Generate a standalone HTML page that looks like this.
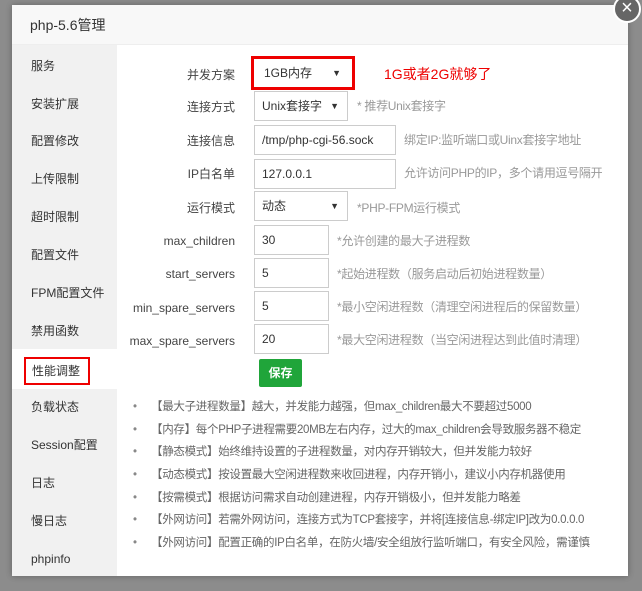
<!DOCTYPE html>
<html><head><meta charset="utf-8"><style>
*{margin:0;padding:0;box-sizing:border-box}
body{width:642px;height:591px;background:#8c8c8c;position:relative;overflow:hidden;font-family:"Liberation Sans","Noto Sans CJK SC",sans-serif;font-size:12px;color:#555;line-height:14px}
.dlg{position:absolute;left:12px;top:5px;width:616px;height:571px;background:#fff;box-shadow:0 0 6px rgba(0,0,0,.3)}
.hd{height:40px;background:#f8f8f8;border-bottom:1px solid #eee;font-size:14px;color:#333;line-height:40px;padding-left:18px}
.side{position:absolute;left:0;top:40px;width:105px;bottom:0;background:#f1f1f1}
.side div{position:absolute;left:19px;font-size:12px;color:#333}
.act{position:absolute;left:0;top:304px;width:105px;height:40px;background:#fff}
.lab{position:absolute;width:120px;text-align:right;font-size:12px;color:#444}
.inp{position:absolute;border:1px solid #ccc;height:30px;line-height:28px;padding-left:7px;font-size:12px;color:#333;background:#fff}
.inp .ar{position:absolute;right:8px;top:0;font-size:9px}
.tip{position:absolute;font-size:12px;color:#999;letter-spacing:-0.3px}
ul{position:absolute;left:121px;top:391px;list-style:none}
li{height:22.7px;line-height:22.7px;color:#666;font-size:11.5px;white-space:nowrap;letter-spacing:-0.3px}
li:before{content:"•";display:inline-block;width:18px;color:#888}
.close{position:absolute;left:613px;top:-5px;width:28px;height:28px;border-radius:50%;background:#666;border:2px solid #fff;color:#fff;font-size:20px;line-height:23px;text-align:center}
</style></head><body>
<div class="dlg">
<div class="hd">php-5.6管理</div>
<div class="side">
<div class="act" style="left:0;"></div>
<div style="top:14px">服务</div>
<div style="top:52px">安装扩展</div>
<div style="top:89px">配置修改</div>
<div style="top:127px">上传限制</div>
<div style="top:165px">超时限制</div>
<div style="top:203px">配置文件</div>
<div style="top:241px">FPM配置文件</div>
<div style="top:279px">禁用函数</div>
<div style="top:312px;left:12px;border:2px solid #e00;padding:5px 8px 5px 6px">性能调整</div>
<div style="top:355px">负载状态</div>
<div style="top:393px">Session配置</div>
<div style="top:431px">日志</div>
<div style="top:469px">慢日志</div>
<div style="top:507px">phpinfo</div>
</div>
<div class="lab" style="left:103px;top:63px">并发方案</div>
<div style="position:absolute;left:239px;top:51px;width:104px;height:34px;border:3px solid #e00"></div>
<div class="inp" style="left:245px;top:54px;border:none;width:92px;height:28px">1GB内存<span class="ar">▼</span></div>
<div style="position:absolute;left:372px;top:61px;font-size:14px;line-height:16px;color:#e00">1G或者2G就够了</div>
<div class="lab" style="left:103px;top:95px">连接方式</div>
<div class="inp" style="left:242px;top:86px;width:94px">Unix套接字<span class="ar">▼</span></div>
<div class="tip" style="left:345px;top:94px">* 推荐Unix套接字</div>
<div class="lab" style="left:103px;top:129px">连接信息</div>
<div class="inp" style="left:242px;top:120px;width:142px">/tmp/php-cgi-56.sock</div>
<div class="tip" style="left:392px;top:128px">绑定IP:监听端口或Uinx套接字地址</div>
<div class="lab" style="left:103px;top:162px">IP白名单</div>
<div class="inp" style="left:242px;top:154px;width:142px">127.0.0.1</div>
<div class="tip" style="left:392px;top:161px">允许访问PHP的IP，多个请用逗号隔开</div>
<div class="lab" style="left:103px;top:196px">运行模式</div>
<div class="inp" style="left:242px;top:186px;width:94px">动态<span class="ar">▼</span></div>
<div class="tip" style="left:345px;top:196px">*PHP-FPM运行模式</div>
<div class="lab" style="left:103px;top:229px">max_children</div>
<div class="inp" style="left:242px;top:220px;width:75px">30</div>
<div class="tip" style="left:325px;top:229px">*允许创建的最大子进程数</div>
<div class="lab" style="left:103px;top:262px">start_servers</div>
<div class="inp" style="left:242px;top:253px;width:75px">5</div>
<div class="tip" style="left:325px;top:262px">*起始进程数（服务启动后初始进程数量）</div>
<div class="lab" style="left:103px;top:296px">min_spare_servers</div>
<div class="inp" style="left:242px;top:286px;width:75px">5</div>
<div class="tip" style="left:325px;top:295px">*最小空闲进程数（清理空闲进程后的保留数量）</div>
<div class="lab" style="left:103px;top:329px">max_spare_servers</div>
<div class="inp" style="left:242px;top:319px;width:75px">20</div>
<div class="tip" style="left:325px;top:328px">*最大空闲进程数（当空闲进程达到此值时清理）</div>
<div style="position:absolute;left:247px;top:354px;width:43px;height:28px;background:#20a53a;border-radius:2px;color:#fff;font-weight:bold;text-align:center;line-height:28px">保存</div>
<ul>
<li>【最大子进程数量】越大，并发能力越强，但max_children最大不要超过5000</li>
<li>【内存】每个PHP子进程需要20MB左右内存，过大的max_children会导致服务器不稳定</li>
<li>【静态模式】始终维持设置的子进程数量，对内存开销较大，但并发能力较好</li>
<li>【动态模式】按设置最大空闲进程数来收回进程，内存开销小，建议小内存机器使用</li>
<li>【按需模式】根据访问需求自动创建进程，内存开销极小，但并发能力略差</li>
<li>【外网访问】若需外网访问，连接方式为TCP套接字，并将[连接信息-绑定IP]改为0.0.0.0</li>
<li>【外网访问】配置正确的IP白名单，在防火墙/安全组放行监听端口，有安全风险，需谨慎</li>
</ul>
</div>
<div class="close">×</div>
</body></html>
